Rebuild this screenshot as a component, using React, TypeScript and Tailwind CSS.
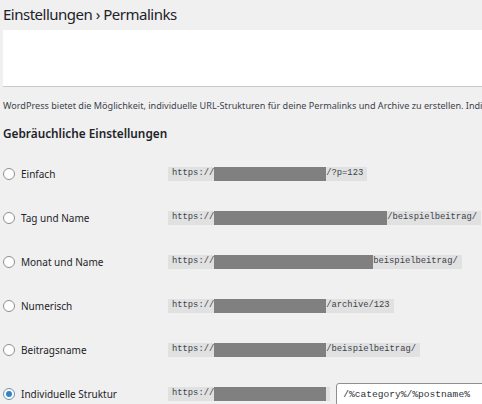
import React from 'react';

type Row = {
  label: string;
  hidden: number;
  suffix: string;
  checked?: boolean;
};

const rows: Row[] = [
  { label: 'Einfach', hidden: 112, suffix: '/?p=123' },
  { label: 'Tag und Name', hidden: 173, suffix: '/beispielbeitrag/' },
  { label: 'Monat und Name', hidden: 159, suffix: 'beispielbeitrag/' },
  { label: 'Numerisch', hidden: 112, suffix: '/archive/123' },
  { label: 'Beitragsname', hidden: 112, suffix: '/beispielbeitrag/' },
  { label: 'Individuelle Struktur', hidden: 112, suffix: '', checked: true },
];

const Radio = ({ checked }: { checked?: boolean }) => (
  <span
    className={`flex h-[12px] w-[12px] shrink-0 items-center justify-center rounded-full border bg-white ${
      checked ? 'border-[#6f8fb0]' : 'border-[#8c8f94]'
    }`}
  >
    {checked && <span className="h-[6px] w-[6px] rounded-full bg-[#3582c4]" />}
  </span>
);

const App = () => {
  return (
    <div
      className="h-[404px] w-[482px] overflow-hidden bg-[#f0f0f1] pl-[3px] text-[#1d2327]"
      style={{ fontFamily: '"Noto Sans", "Open Sans", sans-serif' }}
    >
      <h1 className="h-[30px] whitespace-nowrap text-[15px] leading-[28px] tracking-[-0.5px]">Einstellungen › Permalinks</h1>

      <div className="h-[57px] border-b border-[#c9cacc] bg-white" />

      <p className="mt-[12px] h-[14px] whitespace-nowrap text-[9.1px] leading-[14px] text-[#3c434a]">
        WordPress bietet die Möglichkeit, individuelle URL-Strukturen für deine Permalinks und Archive zu erstellen. Individuelle
      </p>

      <h2 className="mt-[10px] h-[20px] whitespace-nowrap text-[11.8px] font-semibold leading-[20px]">
        Gebräuchliche Einstellungen
      </h2>

      <div className="mt-[9px] flex flex-col">
        {rows.map((r) => (
          <div key={r.label} className="flex h-[44px] items-center">
            <label className="flex w-[165px] shrink-0 items-center gap-[6px] text-[10px] text-[#1d2327]">
              <Radio checked={r.checked} />
              <span className="whitespace-nowrap">{r.label}</span>
            </label>
            <code
              className="flex h-[14px] shrink-0 items-center bg-[#e1e1e1] px-[4px] text-[8.8px] text-[#3c434a]"
              style={{ fontFamily: '"Liberation Mono", "DejaVu Sans Mono", monospace' }}
            >
              <span>https://</span>
              <span className="h-[14px] bg-[#808080]" style={{ width: r.hidden }} />
              {r.suffix && <span className="whitespace-nowrap">{r.suffix}</span>}
            </code>
            {r.checked && (
              <input
                readOnly
                value="/%category%/%postname%"
                className="ml-[6px] h-[23px] w-[160px] shrink-0 rounded-[3px] border border-[#8c8f94] bg-white px-[6px] text-[9.6px] text-[#2c3338] outline-none"
                style={{ fontFamily: '"Liberation Mono", "DejaVu Sans Mono", monospace' }}
              />
            )}
          </div>
        ))}
      </div>
    </div>
  );
};

export default App;
